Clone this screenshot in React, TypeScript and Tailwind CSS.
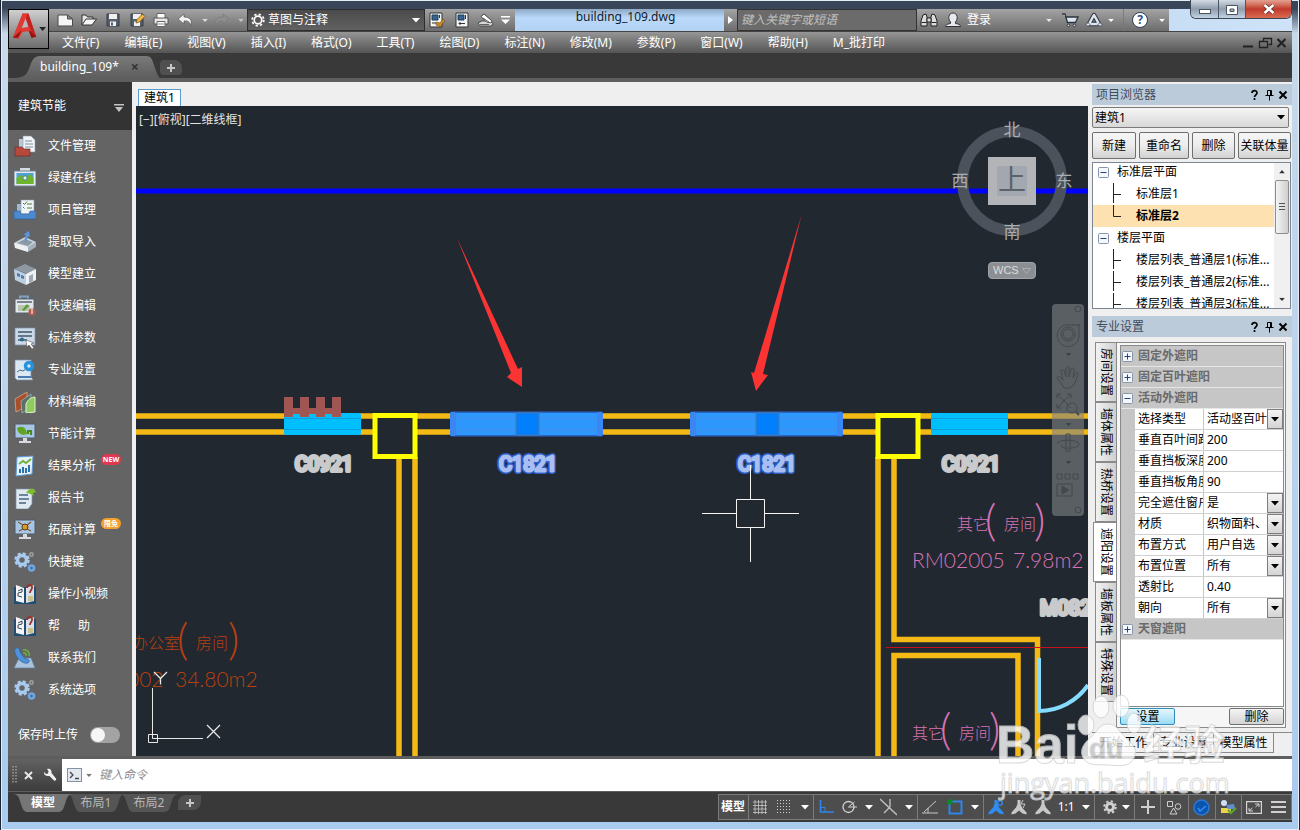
import React, { useState } from 'react';
import clsx from 'clsx';

const MENUS = [
  '文件(F)', '编辑(E)', '视图(V)', '插入(I)', '格式(O)', '工具(T)', '绘图(D)',
  '标注(N)', '修改(M)', '参数(P)', '窗口(W)', '帮助(H)', 'M_批打印',
];

const Caret: React.FC<{ className?: string }> = ({ className = 'text-white' }) => (
  <svg viewBox="0 0 8 5" className={clsx('w-2 h-[5px] shrink-0', className)} fill="currentColor">
    <path d="M0 0h8L4 4.6z" />
  </svg>
);

/* ---------- quick access toolbar icons ---------- */

const quickIcons: { name: string; art: React.ReactNode }[] = [
  {
    name: '新建',
    art: <path d="M1 3h9.500l5 4v7H1zM10.500 3v4h5" fill="#f4f4f4" stroke="#4b4b4b" />,
  },
  {
    name: '打开',
    art: (
      <>
        <path d="M1 13V3h4l1.500 2H12v2" fill="#e4e4e4" stroke="#333" />
        <path d="M1 13l4-6h10.500l-4.500 6z" fill="#f8f8f8" stroke="#333" />
      </>
    ),
  },
  {
    name: '保存',
    art: (
      <>
        <path d="M2 2h12v12H2z" fill="#56606c" stroke="#333c48" />
        <path d="M4 2h8v5H4zM5 9.500h6V14H5z" fill="#f0f0f0" />
        <path d="M6 10.500h2v3H6z" fill="#56606c" />
      </>
    ),
  },
  {
    name: '另存为',
    art: (
      <>
        <path d="M2 2h12v12H2z" fill="#56606c" stroke="#333c48" />
        <path d="M4 2h8v5H4zM5 9.500h6V14H5z" fill="#f0f0f0" />
        <path d="M7 11l1-3.500L13.500 2 16 4.500 10.500 10z" fill="#f0b840" stroke="#6d4a12" strokeWidth=".7" />
      </>
    ),
  },
  {
    name: '打印',
    art: (
      <>
        <path d="M4 1.500h8v5H4z" fill="#fff" stroke="#666" />
        <path d="M1 6h14v6H1z" fill="#e8e8e8" stroke="#555" />
        <path d="M4 9.500h8v5H4z" fill="#fff" stroke="#666" />
        <path d="M5 12h6" stroke="#888" />
      </>
    ),
  },
  {
    name: '放弃',
    art: <path d="M7 2L1 7l6 5V9c4-.5 6 1 6.500 4.500C16 8 12.500 5 7 5z" fill="#f2f2f2" stroke="#555" strokeWidth=".7" />,
  },
];

const QuickAccess: React.FC = () => (
  <div className="flex items-center w-[198px] pl-2 bg-linear-to-b from-[#a4a4a4] to-[#6c6c6c]">
    {quickIcons.map((icon) => (
      <button key={icon.name} title={icon.name} className="w-6 h-5 flex items-center">
        <svg viewBox="0 0 17 16" className="w-[17px] h-4">{icon.art}</svg>
      </button>
    ))}
    <Caret className="text-[#d8d8d8] scale-75" />
    <button title="重做" className="w-5 h-5 ml-1 flex items-center">
      <svg viewBox="0 0 17 16" className="w-[17px] h-4">
        <path d="M10 2l6 5-6 5V9C6 8.500 4 10 3.500 13.500 1 8 4.500 5 10 5z" fill="#8e8e8e" stroke="#777" strokeWidth=".7" />
      </svg>
    </button>
    <Caret className="text-[#c4c4c4] ml-1 scale-75" />
  </div>
);

const WindowControls: React.FC = () => (
  <div className="flex w-[102px] h-[19px] -mt-[9px] ml-[21px] rounded-b-md border border-t-0 border-[#3b4654] overflow-hidden">
    <button title="最小化" className="w-[28px] bg-linear-to-b from-[#d3dbe4] via-[#8f9cab] to-[#c3d4e6] border-r border-[#4a5666] grid place-items-center">
      <span className="block w-3 h-[5px] mt-[5px] bg-white border border-[#4a5460]" />
    </button>
    <button title="还原" className="w-[27px] bg-linear-to-b from-[#d3dbe4] via-[#8f9cab] to-[#c3d4e6] border-r border-[#4a5666] grid place-items-center">
      <svg viewBox="0 0 12 11" className="w-3 h-[11px]">
        <path d="M.5 1.500h11v9H.5z" fill="#fff" stroke="#4a5460" />
        <path d="M4 5h4v2.500H4z" fill="#9fb0c2" stroke="#4a5460" />
      </svg>
    </button>
    <button title="关闭" className="flex-1 bg-linear-to-b from-[#e3a191] via-[#c0392b] to-[#d96b53] grid place-items-center">
      <svg viewBox="0 0 12 10" className="w-3 h-[10px]">
        <path d="M1.500 1l9 8M10.500 1l-9 8" stroke="#5b2a26" strokeWidth="4" />
        <path d="M1.500 1l9 8M10.500 1l-9 8" stroke="#fff" strokeWidth="2.600" />
      </svg>
    </button>
  </div>
);

const TitleBar: React.FC = () => (
  <div className="flex h-[23px] bg-linear-to-r from-[#6d8aa8] via-[#a9c9ea] to-[#cfe3f8] border-b border-[#444]">
    <QuickAccess />
    <div className="relative w-[178px] border border-[#2e2e2e] bg-linear-to-b from-[#4b4b4b] to-[#616161] flex items-center">
      <svg viewBox="0 0 16 16" className="absolute left-[3px] size-[14px] pointer-events-none" fill="none" stroke="#fff">
        <circle cx="8" cy="8" r="4.300" strokeWidth="2" />
        <circle cx="8" cy="8" r="6.600" strokeWidth="2" strokeDasharray="2.600 2.580" />
      </svg>
      <select aria-label="工作空间" className="appearance-none w-full h-full pl-5 text-white text-xs outline-none">
        <option>草图与注释</option>
      </select>
      <Caret className="absolute right-1 pointer-events-none text-white" />
    </div>
    <div className="flex items-center w-[90px] pl-1 bg-linear-to-b from-[#a4a4a4] to-[#6c6c6c]">
      <button title="建筑节能" className="w-6">
        <svg viewBox="0 0 17 16" className="w-[17px] h-4">
          <path d="M1 1h12v14H1z" fill="#f2f4f6" stroke="#333" />
          <path d="M3 3h6v5H3z" fill="#36648c" stroke="#1d3d5a" />
          <path d="M10.500 3v3M3 11h4" stroke="#333" />
          <path d="M7 10l4 1 3-4 2 2-3 3-1 3-5-2z" fill="#c98a2e" stroke="#6e4712" strokeWidth=".6" />
        </svg>
      </button>
      <button title="图层" className="w-6">
        <svg viewBox="0 0 17 16" className="w-[17px] h-4">
          <path d="M3 1h12v14H3z" fill="#f2f4f6" stroke="#333" />
          <path d="M5 3h6v5H5z" fill="#36648c" stroke="#1d3d5a" />
          <path d="M12.500 3v4M6 11.500h6M6 11.500l1.500-1.500M6 11.500l1.500 1.500" stroke="#333" fill="none" />
        </svg>
      </button>
      <button title="图纸" className="w-6">
        <svg viewBox="0 0 17 16" className="w-[17px] h-4">
          <path d="M1 11l4-2h8l3.500 3-3 2H3z" fill="#d8d8d8" stroke="#333" strokeWidth=".8" />
          <path d="M4 4.500l3-2.500 7.500 6.500c1 1-1 3-2 2l-3-.5z" fill="#fff" stroke="#333" strokeWidth=".9" />
          <path d="M6 6l6 4M3 12.500h9" stroke="#444" strokeWidth=".8" />
        </svg>
      </button>
      <svg viewBox="0 0 9 8" className="w-[9px] h-2">
        <path d="M0 0h9v1.500H0zM0 3.500h9L4.500 8z" fill="#fff" />
      </svg>
    </div>
    <div className="flex-1 text-center text-xs leading-4 text-[#111c2a] bg-linear-to-b from-[#8fa9c6] via-[#b9d9fb] via-40% to-[#b4d2f2] pl-3">
      building_109.dwg
    </div>
    <button title="展开" className="w-[13px] bg-linear-to-b from-[#a4a4a4] to-[#6c6c6c] grid place-items-center">
      <svg viewBox="0 0 5 8" className="w-[5px] h-2"><path d="M0 0l5 4-5 4z" fill="#fff" /></svg>
    </button>
    <input
      aria-label="搜索"
      placeholder="键入关键字或短语"
      className="w-[180px] px-[3px] text-xs italic border border-[#333] bg-[#6b6b6b] placeholder:text-[#c2c2c2] outline-none"
    />
    <div className="flex items-center w-[252px] pl-[3px] text-white bg-linear-to-b from-[#a4a4a4] to-[#6c6c6c]">
      <button title="查找" className="w-6">
        <svg viewBox="0 0 18 16" className="w-[18px] h-4" fill="#dcdcdc" stroke="#222">
          <path d="M3 3l3-1 1 3v9H1V9zM15 3l-3-1-1 3v9h6V9z" />
          <path d="M7 6h4v4H7zM1.500 10.500h5M11.500 10.500h5" />
        </svg>
      </button>
      <button className="flex items-center text-xs">
        <svg viewBox="0 0 18 16" className="w-[18px] h-4 mr-[5px]" fill="#e6eaf0" stroke="#333">
          <path d="M1.500 14.500c0-2 2-2.500 5-3V10C3.500 6.500 4.500 1 9 1s5.500 5.500 2.500 9v1.500c3 .5 5 1 5 3z" />
        </svg>
        登录
      </button>
      <Caret className="ml-auto text-[#e8e8e8] scale-75" />
      <button title="应用商店" className="ml-2">
        <svg viewBox="0 0 18 16" className="w-[18px] h-4" fill="#dfe5ee" stroke="#2b3442">
          <path d="M1 2h3l2.500 8.500h8L17 5H5.500" strokeWidth="1.300" />
          <circle cx="7.500" cy="13.500" r="1.300" /><circle cx="13.500" cy="13.500" r="1.300" />
        </svg>
      </button>
      <button title="连接" className="ml-[6px]">
        <svg viewBox="0 0 18 16" className="w-[18px] h-4" fill="none">
          <path d="M9 3L4 12h10z" stroke="#2b3442" strokeWidth="4.500" strokeLinejoin="round" />
          <path d="M9 3L4 12h10z" stroke="#e1e6ee" strokeWidth="2.500" strokeLinejoin="round" />
          <path d="M1 12.500l2-2 2 2-2 2zM17 12.500l-2-2-2 2 2 2z" fill="#e1e6ee" stroke="#2b3442" strokeWidth=".7" />
        </svg>
      </button>
      <Caret className="ml-1 scale-75" />
      <span className="w-px h-full mx-2 bg-[#7a7a7a]" />
      <button title="帮助" className="mr-[10px] size-4 rounded-full bg-white border border-[#2d3f5c] text-[#2a4d8c] text-xs leading-[14px] font-bold">?</button>
      <Caret className="mr-[3px] scale-75" />
    </div>
    <WindowControls />
  </div>
);

const Header: React.FC = () => (
  <header className="flex h-11 shrink-0 bg-[#555]">
    <button title="应用程序菜单" className="w-[41px] h-10 shrink-0 bg-linear-to-b from-[#d0d0d0] to-[#6d6d6d] border border-black flex items-center">
      <svg viewBox="0 0 40 38" className="w-10 h-[38px]">
        <path d="M4 28L14 3h6l8 24-5 1-3-8-8 1-3 7z" fill="#c4201f" />
        <path d="M14 3l5 1-6 14 8-1 2 4-9 1-4 7-6-1z" fill="#e23a32" />
        <path d="M17 8l-4 10 7-1z" fill="#b9b9b9" />
        <path d="M4 28l9-8-4 8zM23 28l-3-8 8 7z" fill="#8f1414" />
        <path d="M31 17h7l-3.500 4z" fill="#222" />
      </svg>
    </button>
    <div className="flex-1 min-w-0">
      <TitleBar />
      <div className="flex h-[21px] items-center bg-linear-to-b from-[#969696] to-[#555] text-white text-xs">
        <nav className="flex-1 flex gap-[25px] pl-[13px] whitespace-nowrap">
          {MENUS.map((m) => (
            <button key={m} className="leading-5">{m}</button>
          ))}
        </nav>
        <svg viewBox="0 0 46 12" className="w-[46px] h-3 mr-1" fill="none" stroke="#222">
          <path d="M1 9.500h10" strokeWidth="2" />
          <path d="M21.500 4V1.500h8v6h-3M17.500 4.500h8v6h-8z" strokeWidth="1.300" />
          <path d="M35.500 2l8 8M43.500 2l-8 8" strokeWidth="2.200" />
        </svg>
      </div>
    </div>
  </header>
);

const FileTabs: React.FC = () => (
  <div className="flex items-end h-[29px] shrink-0 bg-[#393939] border-b-4 border-[#5e5e5e]">
    <div className="relative ml-2 w-[144px] h-[22px]">
      <svg viewBox="0 0 144 22" className="absolute inset-0 w-full h-full">
        <defs>
          <linearGradient id="docTab" x1="0" y1="0" x2="0" y2="1">
            <stop offset="0" stopColor="#7a7a7a" />
            <stop offset="1" stopColor="#5e5e5e" />
          </linearGradient>
        </defs>
        <path d="M0 22c10-1 11-4 14-12S19 0 25 0h105c5 0 6 3 8 9s4 12 6 13z" fill="url(#docTab)" />
      </svg>
      <div className="relative flex items-center h-full pl-6 text-xs text-white">
        <span>building_109*</span>
        <button title="关闭" className="ml-3 text-[#333] leading-4 font-bold text-sm">×</button>
      </div>
    </div>
    <button title="新图形" className="mb-[3px] w-[22px] h-[15px] grid place-items-center bg-[#505050] rounded-tl-sm rounded-tr-lg rounded-b-sm">
      <svg viewBox="0 0 8 8" className="size-2"><path d="M4 0v8M0 4h8" stroke="#c6c6c6" strokeWidth="2" /></svg>
    </button>
  </div>
);

/* ---------- left sidebar ---------- */

const gears = (
  <>
    <circle cx="8" cy="9" r="4.500" fill="none" stroke="#a9caef" strokeWidth="3.500" />
    <circle cx="8" cy="9" r="6.500" fill="none" stroke="#a9caef" strokeWidth="2.500" strokeDasharray="3 2.100" />
    <circle cx="17.500" cy="17" r="2.500" fill="none" stroke="#6aa6ea" strokeWidth="2.500" />
    <circle cx="17.500" cy="3.500" r="1.700" fill="none" stroke="#a2a2a2" strokeWidth="1.500" />
  </>
);

const book = (
  <>
    <path d="M0 4h22v17H0z" fill="#1f4d74" />
    <path d="M2 2l8 3v15l-8-2z" fill="#f4f4f4" />
    <path d="M20 2l-8 3v15l8-2z" fill="#d9e0e8" />
    <path d="M4 8l4-2v3l-4 1v3l4 1" stroke="#345" fill="none" />
    <path d="M13 5c0-4 6-4 5 0 0 2-2 2-2 5" stroke="#a03030" strokeWidth="1.800" fill="none" />
    <path d="M14 13h5v5h-5z" fill="#c9c08a" />
  </>
);

const screen = (
  <>
    <path d="M1 1h20v14H1z" fill="#a8c6e4" stroke="#4f5a66" />
    <path d="M9 15h4v3H9zM5 18h12v2H5z" fill="#d6dade" />
  </>
);

const sidebarItems: { label: string; badge?: 'new' | 'free'; art: React.ReactNode }[] = [
  {
    label: '文件管理',
    art: (
      <>
        <path d="M5 4h10v13H5z" fill="#b9c7d6" />
        <path d="M9 1h8l4 4v12H9z" fill="#f2f5f8" stroke="#8c98a5" strokeWidth=".6" />
        <path d="M11 6h7M11 9h8M11 12h8" stroke="#7d8ea0" />
        <path d="M1 12h7l2 2h6v7H1z" fill="#b4493c" stroke="#7c2a22" strokeWidth=".7" />
      </>
    ),
  },
  {
    label: '绿建在线',
    art: (
      <>
        <path d="M6 1h10v4H6z" fill="#d5dbe2" />
        <path d="M0 4h22v15H0z" fill="#e3e9ef" stroke="#6d8298" />
        <path d="M2.500 6h17v11h-17z" fill="#4fa3d1" />
        <path d="M2.500 17v-6l5-3 4 3 4-4 4 4v6z" fill="#6fb52c" />
        <circle cx="11" cy="11" r="2.200" fill="#f5f0c8" stroke="#2f7fb0" />
      </>
    ),
  },
  {
    label: '项目管理',
    art: (
      <>
        <path d="M3 5h5v9H3z" fill="#9fb9d4" />
        <path d="M7 1h13v14H7z" fill="#f0f4f7" stroke="#8c98a5" strokeWidth=".6" />
        <path d="M9 4l1.500 1.500L13 2.500M9 8l1.500 1.500M13 5h5M13 9h5" stroke="#4b7a3a" fill="none" />
        <path d="M0 12h6l1 3h8l1-3h6v8H0z" fill="#4c8ad0" stroke="#2d5c98" strokeWidth=".6" />
      </>
    ),
  },
  {
    label: '提取导入',
    art: (
      <>
        <path d="M0 12l11-6 11 5-8 9z" fill="#cdd6de" />
        <path d="M0 12l14 4v5L1 17z" fill="#eef1f4" />
        <path d="M14 16l8-5v5l-8 5z" fill="#a3afba" />
        <path d="M3 12l8-4 8 3-5 4z" fill="#8d99a4" />
        <path d="M12 12c-2-4-1-7 0-8l-2.500-.5L15 0l1 6-1.500-1c-1 2-1.500 4-2.500 7z" fill="#5b96e0" />
      </>
    ),
  },
  {
    label: '模型建立',
    art: (
      <>
        <path d="M0 6l11-5 11 5-8 5z" fill="#8d98a3" />
        <path d="M0 6l12 5v11L1 17z" fill="#bccfe3" />
        <path d="M12 11l10-5v11l-10 5z" fill="#edf1f4" />
        <path d="M3 10l3 1v3l-3-1zM7 12l3 1v3l-3-1z" fill="#4f79a6" />
        <path d="M15 13l4-2v7l-4 2z" fill="#9aa8b5" />
      </>
    ),
  },
  {
    label: '快速编辑',
    art: (
      <>
        <path d="M6 4V1.500h8V4" fill="none" stroke="#7fa3c4" strokeWidth="2" />
        <path d="M1 4h19v14H1z" fill="#e3e8ec" stroke="#56636f" />
        <path d="M3 7h15" stroke="#56636f" strokeWidth="1.500" />
        <path d="M4 10h12v6H4z" fill="#b8c6ae" />
        <path d="M8 15l5-6 2 2-5 5z" fill="#5c9a3c" />
        <circle cx="18" cy="17" r="3.500" fill="#b55a50" /><path d="M18 14v5" stroke="#fff" />
      </>
    ),
  },
  {
    label: '标准参数',
    art: (
      <>
        <path d="M1 1h20v17H1z" fill="#c9d9e8" stroke="#7b8fa3" strokeWidth=".7" />
        <path d="M4 5h14M4 9h14M4 13h9" stroke="#41566b" strokeWidth="1.500" />
        <circle cx="8" cy="12.500" r="2" fill="#2d6894" />
        <path d="M12 13l8 3-3 1 3 4-2 1-3-4-2 2z" fill="#fff" stroke="#555" strokeWidth=".6" />
      </>
    ),
  },
  {
    label: '专业设置',
    art: (
      <>
        <path d="M1 1h16v17l2 3H3l-2-2z" fill="#dbe7f2" stroke="#7b8fa3" strokeWidth=".7" />
        <path d="M3 13l3-2 3 1 3-2" stroke="#4a6b8d" fill="none" />
        <path d="M4 18h13" stroke="#4a7bb0" strokeWidth="2" />
        <circle cx="15" cy="7" r="3.500" fill="none" stroke="#2393dd" strokeWidth="3.500" />
      </>
    ),
  },
  {
    label: '材料编辑',
    art: (
      <>
        <path d="M1 8L13 1v14L2 21z" fill="#a8502d" stroke="#e0b49b" strokeWidth=".7" />
        <path d="M7 10l10-7v13L8 22z" fill="#59716e" stroke="#a9bdb9" strokeWidth=".7" />
        <path d="M12 22V13c2-5 6-7 9-7v15z" fill="#8fcb5e" stroke="#e3f2d3" />
      </>
    ),
  },
  {
    label: '节能计算',
    art: (
      <>
        {screen}
        <path d="M3 5c6-3 9 0 10 6-5 2-9 0-10-6z" fill="#5fa51e" />
        <path d="M14 11V8h3v4" stroke="#4a8a1a" strokeWidth="2" fill="none" />
      </>
    ),
  },
  {
    label: '结果分析',
    badge: 'new',
    art: (
      <>
        <path d="M3 2l16-1-1 18-16 2z" fill="#e9f1f8" stroke="#5e9bd0" />
        <path d="M5 9l4-3 3 2 5-4" stroke="#6db33f" strokeWidth="2" fill="none" />
        <path d="M6 18v-4M9 18v-6M12 18v-5M15 17v-7" stroke="#2872b3" strokeWidth="2" />
      </>
    ),
  },
  {
    label: '报告书',
    art: (
      <>
        <path d="M2 2h16v15l-4 5H2z" fill="#dfe9f2" stroke="#7b8fa3" strokeWidth=".7" />
        <path d="M5 8h9M5 12h10M5 16h7" stroke="#49637d" strokeWidth="1.500" />
        <path d="M12 6c2-4 5-5 8-4l2 3-3 1 1 3c-3-2-5-3-8-3z" fill="#7dbb2f" />
      </>
    ),
  },
  {
    label: '拓展计算',
    badge: 'free',
    art: (
      <>
        {screen}
        <circle cx="11" cy="8" r="3" fill="#d89b2b" stroke="#5a3b12" />
        <path d="M4 3l5 3M17 3l-4 3M5 12l4-2M17 12l-4-2" stroke="#7a5a32" strokeWidth="1.300" />
      </>
    ),
  },
  { label: '快捷键', art: gears },
  { label: '操作小视频', art: book },
  { label: '帮\u3000\u2002助', art: book },
  {
    label: '联系我们',
    art: (
      <>
        <path d="M5 11h12l4 10H0z" fill="#a9c3dd" stroke="#5f7f9e" strokeWidth=".7" />
        <path d="M1 2c3-3 5 0 5 3l5 7c3-1 6 2 3 4C8 18-1 8 1 2z" fill="#4f93dc" stroke="#2c62a0" strokeWidth=".7" />
        <path d="M9 6c2-1 4 1 3 3M9 3c4-1 7 2 6 6" stroke="#6db33f" strokeWidth="1.500" fill="none" />
      </>
    ),
  },
  { label: '系统选项', art: gears },
];

const Sidebar: React.FC = () => {
  const [upload, setUpload] = useState(false);

  return (
    <aside className="w-[124px] shrink-0 flex flex-col bg-[#646464] text-white text-xs">
      <button className="h-12 shrink-0 flex items-center justify-between pl-[10px] pr-2 bg-[#333]">
        建筑节能
        <svg viewBox="0 0 10 8" className="w-[10px] h-2 mt-1"><path d="M0 0h10v1.500H0zM1 3h8L5 8z" fill="#c4c4c4" /></svg>
      </button>
      <ul>
        {sidebarItems.map((item) => (
          <li key={item.label}>
            <button className="flex items-center w-full h-8 pl-[6px]">
              <svg viewBox="0 0 22 22" className="size-[22px] mr-3">{item.art}</svg>
              <span className="relative">
                {item.label}
                {item.badge === 'new' && (
                  <span className="absolute left-full -top-1 ml-[5px] w-5 h-[11px] rounded-full bg-[#e0394f] text-[7px] leading-[11px] font-bold text-center">NEW</span>
                )}
                {item.badge === 'free' && (
                  <span className="absolute left-full -top-1 ml-[5px] w-5 h-[11px] rounded-full bg-[#f5a02c] text-[7px] leading-[11px] font-bold text-center">限免</span>
                )}
              </span>
            </button>
          </li>
        ))}
      </ul>
      <label className="flex items-center gap-3 mt-[21px] pl-[10px]">
        保存时上传
        <input type="checkbox" className="peer sr-only" checked={upload} onChange={() => setUpload(!upload)} />
        <span className="w-[30px] h-4 rounded-full bg-[#a3a3a3] p-px peer-checked:bg-sky-500">
          <span className={clsx('block size-[14px] rounded-full bg-[#f6f6f6]', upload && 'ml-[14px]')} />
        </span>
      </label>
    </aside>
  );
};

/* ---------- drawing area ---------- */

const SelectedWindow: React.FC<{ x: number }> = ({ x }) => (
  <g>
    <rect x={x} y="411.500" width="153" height="25" rx="2" fill="#2a66c8" />
    <rect x={x + 2} y="413" width="149" height="22" fill="#2d97fb" />
    <path d={`M${x + 6} 418h140M${x + 6} 430h140`} stroke="#4a8ce8" />
    <rect x={x} y="412" width="6" height="24" rx="2" fill="#3c86f4" />
    <rect x={x + 147} y="412" width="6" height="24" rx="2" fill="#3c86f4" />
    <rect x={x + 66} y="413" width="23" height="22" fill="#0080ff" stroke="#4a78b0" />
  </g>
);

const PlainWindow: React.FC<{ x: number }> = ({ x }) => (
  <g>
    <rect x={x} y="413" width="77" height="22" rx="2" fill="#00bfff" />
    <path d={`M${x} 418.500h77M${x} 429.500h77`} stroke="#0f9fdc" />
  </g>
);

const Drawing: React.FC = () => (
  <svg viewBox="136 106 952 650" preserveAspectRatio="xMidYMid slice" className="absolute inset-0 w-full h-full">
    <path d="M136 191h952" stroke="#0000ff" strokeWidth="5" />

    {/* walls */}
    <g fill="none" stroke="#f5b915" strokeWidth="5.500">
      <path d="M136 416h952M136 432h952" />
      <path d="M399 457v299M415 457v299M878 457v299" />
      <path d="M894 457v182.500h143.500V756M894 756V655.500h124V756" />
    </g>
    <path d="M886 647h202v1h-202z" fill="#c8101c" />
    <path d="M1039 658v53c20 0 38-10 49-26" fill="none" stroke="#86dcff" strokeWidth="4" />

    {/* columns */}
    <rect x="375" y="415.500" width="40" height="41" fill="#212830" stroke="#ffff00" strokeWidth="5" />
    <rect x="878" y="415.500" width="40" height="41" fill="#212830" stroke="#ffff00" strokeWidth="5" />

    <PlainWindow x={284} />
    <PlainWindow x={931} />
    <path d="M284 397h9v11h7v-11h9v11h7v-11h9v11h7v-11h9v20h-9v-3h-7v3h-9v-3h-7v3h-9v-3h-7v3h-9z" fill="#a05653" />
    <SelectedWindow x={450} />
    <SelectedWindow x={690} />

    {/* opening tags */}
    <g className="font-['Roboto','Liberation_Sans',sans-serif]" fontSize="20" strokeLinejoin="round">
      <g fill="#c9cacb" stroke="#c9cacb" strokeWidth="4">
        <text x="295" y="471">C0921</text>
        <text x="942" y="471">C0921</text>
        <text x="1040" y="615">M0821</text>
      </g>
      <g fill="#2b5cc4" stroke="#2b5cc4" strokeWidth="6">
        <text x="499" y="471">C1821</text>
        <text x="738" y="471">C1821</text>
      </g>
      <g fill="#a9bff2" stroke="#a9bff2" strokeWidth="3">
        <text x="499" y="471">C1821</text>
        <text x="738" y="471">C1821</text>
      </g>
    </g>

    {/* room names */}
    <g className="font-['Lato','Noto_Sans_CJK_SC',sans-serif]" fontWeight="300">
      <g fill="#d673b4">
        <text x="957" y="530" fontSize="16">其它</text>
        <text x="985" y="536" fontSize="44">(</text>
        <text x="1004" y="530" fontSize="16">房间</text>
        <text x="1034" y="536" fontSize="44">)</text>
        <text x="912" y="568" fontSize="21">RM02005</text>
        <text x="1013" y="568" fontSize="21">7.98m2</text>
        <text x="912" y="739" fontSize="16">其它</text>
        <text x="940" y="745" fontSize="44">(</text>
        <text x="959" y="739" fontSize="16">房间</text>
        <text x="989" y="745" fontSize="44">)</text>
      </g>
      <g fill="#b8400f">
        <text x="132" y="649" fontSize="16">办公室</text>
        <text x="177" y="655" fontSize="44">(</text>
        <text x="196" y="649" fontSize="16">房间</text>
        <text x="228" y="655" fontSize="44">)</text>
        <text x="127" y="687" fontSize="21">002</text>
        <text x="175" y="687" fontSize="21">34.80m2</text>
      </g>
    </g>

    {/* ucs icon */}
    <g fill="none" stroke="#e8e8e8">
      <path d="M152.500 688v50.500H203M148.500 734.500h9v8h-9z" />
      <path d="M154 672l6.500 6.500L167 672M160.500 678.500v6M207 725l13 13M220 725l-13 13" strokeWidth="1.300" />
    </g>

    {/* callout arrows */}
    <path d="M457 238l54 135-4 4 15 10 0-20-4 2z" fill="#fb3433" />
    <path d="M801.500 215l-47.500 158-3-1 5 19 12-16-5-1z" fill="#fb3433" />

    {/* crosshair */}
    <path d="M702 513.500h34M765 513.500h34M750.500 465v34M750.500 528v34M736.500 499.500h28v28h-28z" fill="none" stroke="#f4f4f4" />
  </svg>
);

const ViewCube: React.FC = () => (
  <div className="absolute top-[14px] right-[15px] w-[122px] text-[#a9adb1]">
    <div className="relative grid grid-cols-[18px_1fr_18px] grid-rows-[20px_1fr_20px] h-[122px] place-items-center text-[17px] leading-[22px]">
      <svg viewBox="0 0 122 122" className="absolute inset-0 w-full h-full">
        <circle cx="61" cy="61" r="49.500" fill="none" stroke="#4b525b" strokeWidth="11" />
      </svg>
      <span className="relative col-start-2">北</span>
      <span className="relative col-start-1 row-start-2">西</span>
      <div className="relative col-start-2 row-start-2 size-12 grid place-items-center bg-[#b3b4b7]">
        <span className="size-[30px] bg-[#a3a8b0] text-[#5c626a] text-[28px] leading-[26px] text-center">上</span>
      </div>
      <span className="relative col-start-3 row-start-2">东</span>
      <span className="relative col-start-2 row-start-3">南</span>
    </div>
    <button className="mt-[20px] mx-auto flex items-center justify-between w-12 h-[17px] px-1 rounded-sm bg-[#8b8f94] border border-[#a0a3a7] text-[11px] text-[#dcdcdc] font-['Liberation_Sans',sans-serif]">
      WCS
      <svg viewBox="0 0 9 6" className="w-[9px] h-[6px]"><path d="M.5.5h8l-4 5z" fill="none" stroke="#a9acb0" /></svg>
    </button>
  </div>
);

const NavBar: React.FC = () => (
  <div className="absolute top-[198px] right-1 w-8 h-[212px] rounded-sm bg-[#7f8385]/60">
    <svg viewBox="0 0 32 212" className="w-full h-full" fill="none" stroke="#44494d">
      <circle cx="26" cy="5" r="3" />
      <path d="M27 20v13a11 11 0 1 1-8-12h8z" />
      <circle cx="16" cy="30" r="7" /><circle cx="16" cy="30" r="5" />
      <path d="M14 49h5l-2.500 3zM14 119h5l-2.500 3zM14 157h5l-2.500 3z" fill="#3b4044" stroke="none" />
      <path d="M9 79l-4-5c0-2 3-2 4 0l2 2-2-9c0-2 2-2 3 0l2 6V64c1-2 3-2 3 0v9l2-8c1-2 3-1 3 1l-1 8 3-5c1-1 3 0 2 2l-4 10-4 3h-6z" />
      <path d="M5 90l14 14M19 90L5 104M5 94v-4h4M15 90h4v4M5 100v4h4" />
      <circle cx="20" cy="104" r="5" /><path d="M24 108l3 3" strokeWidth="2" />
      <path d="M14 130h4v17h-4zM5 140c0-5 22-5 22 0s-16 5-16 3M9 141l2 3" />
      <path d="M5 170h5v5H5zM13 170h5v5h-5zM21 170h5v5h-5zM5 180h15v12H5z" />
      <path d="M10 182l7 4-7 4z" fill="#44494d" />
      <circle cx="26" cy="206" r="3" />
    </svg>
  </div>
);

const Viewport: React.FC = () => (
  <main className="flex-1 min-w-0 flex flex-col bg-[#efefef] pl-1">
    <div className="h-6 shrink-0 pt-[2px] pl-[2px]">
      <button className="h-[18px] px-[5px] text-xs leading-4 text-black bg-white border border-b-0 border-[#5a9bd3]">建筑1</button>
    </div>
    <div className="relative flex-1 bg-[#212830] overflow-hidden">
      <Drawing />
      <div className="relative px-[3px] pt-[5px] text-xs leading-[17px] text-[#e4e4e4]">[−][俯视][二维线框]</div>
      <ViewCube />
      <NavBar />
    </div>
  </main>
);

/* ---------- right dock ---------- */

const PanelTitle: React.FC<{ title: string }> = ({ title }) => (
  <div className="flex items-center h-[21px] shrink-0 pl-1 pr-1 bg-[#bccbda] text-xs text-[#3f4c5c]">
    <h2 className="flex-1">{title}</h2>
    <svg viewBox="0 0 38 12" className="w-[38px] h-3" fill="none" stroke="#000">
      <path d="M2 4c0-3 5-3 5-.5S4.500 6 4.500 8M4.500 9v2" strokeWidth="1.700" />
      <path d="M17.500 6V1.500h4V6M15.500 6.500h8M19.500 7v4.500M20.500 2v4" />
      <path d="M29.500 2.500l7 7M36.500 2.500l-7 7" strokeWidth="2" />
    </svg>
  </div>
);

const Toggle: React.FC<{ open: boolean }> = ({ open }) => (
  <svg viewBox="0 0 11 11" className="size-[11px] shrink-0">
    <rect x=".5" y=".5" width="10" height="10" rx="1" fill="#f4f7fb" stroke="#8795ab" />
    <path d={open ? 'M2.500 5.500h6' : 'M2.500 5.500h6M5.500 2.500v6'} stroke="#2a3f7c" />
  </svg>
);

const tree = [
  { name: '标准层平面', items: ['标准层1', '标准层2'] },
  { name: '楼层平面', items: ['楼层列表_普通层1(标准...', '楼层列表_普通层2(标准...', '楼层列表_普通层3(标准...'] },
];

const ProjectBrowser: React.FC = () => {
  const [active, setActive] = useState('标准层2');

  return (
    <section className="flex flex-col">
      <PanelTitle title="项目浏览器" />
      <div className="relative mt-[2px] mr-[3px]">
        <select aria-label="项目" className="appearance-none block w-full h-[21px] pl-[2px] text-xs text-black rounded-xs border border-[#7a7a7a] bg-linear-to-b from-[#f5f5f5] to-[#d8d8d8] outline-none">
          <option>建筑1</option>
        </select>
        <Caret className="absolute right-1 top-2 text-black pointer-events-none" />
      </div>
      <div className="grid grid-cols-[44px_50px_43px_1fr] gap-x-[3px] mt-[4px] pr-px">
        {['新建', '重命名', '删除', '关联体量'].map((b) => (
          <button key={b} className="h-[27px] text-xs text-black whitespace-nowrap rounded-xs border border-[#6f6f6f] bg-linear-to-b from-[#f6f6f6] via-[#ececec] to-[#d2d2d2]">
            {b}
          </button>
        ))}
      </div>
      <div className="flex mt-[3px] mr-px h-[147px] bg-white border border-[#7d8794] overflow-hidden">
        <ul className="flex-1 min-w-0 text-xs leading-[22px] text-black -mt-[2px]">
          {tree.map((group) => (
            <li key={group.name}>
              <div className="flex items-center gap-2 h-[22px] pl-[5px]">
                <Toggle open />
                {group.name}
              </div>
              <ul>
                {group.items.map((name) => (
                  <li key={name}>
                    <button
                      onClick={() => setActive(name)}
                      className={clsx(
                        'flex items-center w-full h-[22px] pl-5 whitespace-nowrap text-left',
                        name === active && 'bg-[#fde1b0] font-bold',
                      )}
                    >
                      <svg viewBox="0 0 8 22" className="w-2 h-[22px] mr-[15px] shrink-0" fill="none" stroke="#222">
                        <path d={name === '标准层2' ? 'M.5 0v11.500H8' : 'M.5 0v20M.5 11.500H8'} />
                      </svg>
                      {name}
                    </button>
                  </li>
                ))}
              </ul>
            </li>
          ))}
        </ul>
        <div className="w-4 shrink-0 flex flex-col items-center bg-[#f0f0f0]">
          <Caret className="text-[#333] rotate-180 mt-[6px] scale-75" />
          <div className="w-[14px] h-[54px] mt-[6px] grid place-items-center rounded-xs border border-[#8d8d8d] bg-linear-to-r from-[#f4f4f4] to-[#cfcfcf]">
            <svg viewBox="0 0 6 8" className="w-[6px] h-2"><path d="M0 .5h6M0 3.500h6M0 6.500h6" stroke="#555" /></svg>
          </div>
          <Caret className="text-[#333] mt-auto mb-[6px] scale-75" />
        </div>
      </div>
    </section>
  );
};

const sideTabs = ['房间设置', '墙体属性', '热桥设置', '遮阳设置', '墙板属性', '特殊设置'];

const props: { label: string; value: string; select?: boolean }[] = [
  { label: '选择类型', value: '活动竖百叶', select: true },
  { label: '垂直百叶间距', value: '200' },
  { label: '垂直挡板深度', value: '200' },
  { label: '垂直挡板角度', value: '90' },
  { label: '完全遮住窗户', value: '是', select: true },
  { label: '材质', value: '织物面料、', select: true },
  { label: '布置方式', value: '用户自选', select: true },
  { label: '布置位置', value: '所有', select: true },
  { label: '透射比', value: '0.40' },
  { label: '朝向', value: '所有', select: true },
];

const Category: React.FC<{ name: string; open?: boolean }> = ({ name, open = false }) => (
  <button className="flex items-center gap-[5px] w-full h-[21px] pl-px bg-[#c6c6c6] border-b border-[#e6e6e6] text-[#6a6a6a] font-bold">
    <Toggle open={open} />
    {name}
  </button>
);

const SettingsPanel: React.FC = () => (
  <section className="flex-1 min-h-0 flex flex-col mt-[7px] text-xs text-black">
    <PanelTitle title="专业设置" />
    <div className="flex flex-1 min-h-0 mt-[5px] mr-[6px] ml-[3px]">
      <div className="w-[21px] shrink-0">
        {sideTabs.map((t) => (
          <button
            key={t}
            className={clsx(
              'block h-[60px] text-xs leading-4 text-center border border-r-0 border-[#8a8a8a] [writing-mode:vertical-rl] [text-orientation:sideways]',
              t === '遮阳设置' ? '-ml-[2px] w-[24px] bg-white' : 'w-[21px] bg-linear-to-r from-[#f2f2f2] to-[#cfcfcf]',
            )}
          >
            {t}
          </button>
        ))}
      </div>
      <div className="flex-1 min-w-0 flex flex-col pt-[2px] pl-[3px] pr-px pb-[2px] border border-[#8a8a8a] bg-[#f6f6f6]">
        <div className="flex-1 border border-[#8a8a8a] bg-white">
          <Category name="固定外遮阳" />
          <Category name="固定百叶遮阳" />
          <Category name="活动外遮阳" open />
          <div className="pl-[14px] bg-[#c6c6c6]">
            {props.map((p, i) => (
              <div key={p.label} className="flex h-[21px] bg-white border-b border-[#d0d0d0]">
                <label htmlFor={`prop-${i}`} className="w-[69px] shrink-0 pl-[3px] leading-5 whitespace-nowrap overflow-hidden border-r border-[#c6c6c6]">
                  {p.label}
                </label>
                {p.select ? (
                  <div className="relative flex-1 min-w-0">
                    <select id={`prop-${i}`} className="appearance-none w-full h-full pl-[3px] pr-4 outline-none">
                      <option>{p.value}</option>
                    </select>
                    <span className="absolute right-0 top-0 w-4 h-5 grid place-items-center pointer-events-none border border-[#7d7d7d] bg-linear-to-b from-[#f4f4f4] to-[#d4d4d4]">
                      <Caret className="text-black" />
                    </span>
                  </div>
                ) : (
                  <input id={`prop-${i}`} defaultValue={p.value} className="flex-1 min-w-0 pl-[3px] outline-none" />
                )}
              </div>
            ))}
          </div>
          <Category name="天窗遮阳" />
        </div>
        <div className="flex justify-between pt-px">
          <button className="w-[55px] h-[17px] leading-[15px] rounded-xs border border-[#2f8fb8] bg-linear-to-b from-[#e6f6fc] to-[#9adcf3]">设置</button>
          <button className="w-[55px] h-[17px] leading-[15px] rounded-xs border border-[#707070] bg-linear-to-b from-[#f4f4f4] to-[#d4d4d4]">删除</button>
        </div>
      </div>
    </div>
    <div className="flex h-6 shrink-0 mt-1 pl-[2px] border-t border-[#8a8a8a]">
      {['开始工作', '专业设置', '模型属性'].map((t) => (
        <button key={t} className="h-5 w-[60px] border-r border-b border-[#8a8a8a] whitespace-nowrap bg-[#f0f0f0]">{t}</button>
      ))}
    </div>
  </section>
);

/* ---------- bottom ---------- */

const CommandLine: React.FC = () => (
  <div className="flex h-9 shrink-0 pt-[3px] pb-px bg-[#5e5e5e]">
    <div className="flex items-center w-[54px] pl-1 bg-linear-to-b from-[#626262] to-[#3c3c3c]">
      <svg viewBox="0 0 5 18" className="w-[5px] h-[18px]">
        <path d="M1 0v18M4 0v18" stroke="#9d9d9d" strokeWidth="1.500" strokeDasharray="1.500 1.500" />
      </svg>
      <button title="关闭" className="ml-[7px]">
        <svg viewBox="0 0 9 9" className="size-[9px]"><path d="M1 1l7 7M8 1L1 8" stroke="#e8e8e8" strokeWidth="2" /></svg>
      </button>
      <button title="自定义" className="ml-[10px]">
        <svg viewBox="0 0 14 14" className="size-[14px]">
          <path d="M1 4l2 2 2-.5L5.500 3 4 1c3-1 5 1 4.500 4l4.500 5.500c1 1-1 3-2 2L6.500 8C3.500 8.500.5 7 1 4z" fill="#f0f0f0" />
        </svg>
      </button>
    </div>
    <div className="flex-1 flex items-center pl-[5px] bg-white">
      <svg viewBox="0 0 15 14" className="w-[15px] h-[14px]">
        <rect x=".5" y=".5" width="14" height="13" fill="#e4e9f0" stroke="#8391a4" />
        <path d="M3 4l3 3-3 3M8 10.500h4" fill="none" stroke="#445" strokeWidth="1.300" />
      </svg>
      <Caret className="ml-[3px] text-[#777] scale-75" />
      <input aria-label="命令行" placeholder="键入命令" className="flex-1 ml-[6px] text-xs italic placeholder:text-[#8c8c8c] outline-none" />
    </div>
  </div>
);

const LayoutTab: React.FC<{ name: string; active?: boolean }> = ({ name, active }) => (
  <button className={clsx('relative h-[18px] w-[58px] -mr-[5px] text-xs leading-4', active ? 'font-bold text-white z-10' : 'text-[#b9b9b9]')}>
    <svg viewBox="0 0 58 18" className="absolute inset-0 w-full h-full">
      <path d="M0 0h58c-5 1-5 4-7 10s-3 8-7 8H14c-4 0-5-2-7-8S5 1 0 0z" fill={active ? '#767676' : '#555'} />
    </svg>
    <span className="relative">{name}</span>
  </button>
);

const StatusCell: React.FC<{ className: string; title: string; children: React.ReactNode }> = ({ className, title, children }) => (
  <button title={title} className={clsx('flex items-center justify-between h-full px-1 border-l border-[#7b7b7b] text-white shrink-0', className)}>
    {children}
  </button>
);

/* compass-like figure with a round head */
const person = 'M6.500 0h3v4l1.500 3.500 4.500 5v2l-4-1L8 10.500 4.500 13.500l-4 1v-2L5 7.500 6.500 4z';

const StatusBar: React.FC = () => (
  <footer className="flex items-start h-[30px] shrink-0 pt-[2px] pl-[6px] bg-[#393939]">
    <LayoutTab name="模型" active />
    <div className="flex">
      <LayoutTab name="布局1" />
      <LayoutTab name="布局2" />
    </div>
    <button title="新建布局" className="w-[23px] h-[15px] mt-px ml-[5px] grid place-items-center bg-[#505050] rounded-tl-lg rounded-br-lg">
      <svg viewBox="0 0 8 8" className="size-2"><path d="M4 0v8M0 4h8" stroke="#c6c6c6" strokeWidth="2" /></svg>
    </button>
    <div className="flex h-[26px] ml-auto bg-[#4d4d4d] border-y border-r border-[#7b7b7b]">
      <StatusCell title="模型" className="w-[30px] text-xs font-bold whitespace-nowrap !px-[2px]">模型</StatusCell>
      <StatusCell title="栅格" className="w-[65px]">
        <svg viewBox="0 0 14 14" className="size-[14px]"><path d="M2 0v14M5.500 0v14M9 0v14M12.500 0v14M0 2h14M0 5.500h14M0 9h14M0 12.500h14" stroke="#c8c8c8" strokeWidth=".8" /></svg>
        <svg viewBox="0 0 14 14" className="size-[14px]" stroke="#d0d0d0" strokeWidth="1" strokeDasharray="1 2"><path d="M0 .5h14M0 3.500h14M0 6.500h14M0 9.500h14M0 12.500h14" /></svg>
        <Caret />
      </StatusCell>
      <StatusCell title="极轴追踪" className="w-[104px]">
        <svg viewBox="0 0 16 14" className="w-4 h-[14px]" fill="none" stroke="#2f86e8"><path d="M2.500 0v12H16" strokeWidth="1.600" /><path d="M3 7.500h4V12" /></svg>
        <svg viewBox="0 0 15 14" className="w-[15px] h-[14px]" fill="none" stroke="#d2d2d2"><circle cx="6.500" cy="7" r="5.500" strokeWidth="1.300" /><path d="M6.500 7l6-5M6.500 7H15" /></svg>
        <Caret />
        <svg viewBox="0 0 17 18" className="w-[17px] h-[18px]" stroke="#c2c2c2" fill="none"><path d="M0 1l17 16M10 1v8M10 9l-6 6" strokeWidth="1.300" /></svg>
        <Caret />
      </StatusCell>
      <StatusCell title="对象捕捉" className="w-[66px]">
        <svg viewBox="0 0 16 14" className="w-4 h-[14px]" fill="none" stroke="#c8c8c8"><path d="M0 13h16M2 12L14 1M6 8v5" /></svg>
        <svg viewBox="0 0 16 16" className="size-4"><rect x="2.500" y="2.500" width="12" height="12" fill="none" stroke="#2f86e8" strokeWidth="2" /><circle cx="3" cy="3" r="2.800" fill="#0c8a28" /></svg>
        <Caret />
      </StatusCell>
      <StatusCell title="注释比例" className="w-[111px] text-xs">
        <svg viewBox="0 0 16 15" className="w-4 h-[15px]"><path d={person} fill="#2f8df0" /><circle cx="12" cy="3" r="2.300" fill="none" stroke="#2f8df0" strokeWidth="1.300" /></svg>
        <svg viewBox="0 0 16 15" className="w-4 h-[15px]"><path d={person} fill="#c8c8c8" /><path d="M12 0l-2 4h4l-2 4" stroke="#c8c8c8" fill="none" /></svg>
        <svg viewBox="0 0 16 15" className="w-4 h-[15px]"><path d={person} fill="#c8c8c8" /></svg>
        1:1
        <Caret />
      </StatusCell>
      <StatusCell title="切换工作空间" className="w-10 pl-2">
        <svg viewBox="0 0 14 14" className="size-[14px]" fill="none" stroke="#d0d0d0"><circle cx="7" cy="7" r="3.500" strokeWidth="3" /><circle cx="7" cy="7" r="5.800" strokeWidth="2" strokeDasharray="2.300 2.250" /></svg>
        <Caret />
      </StatusCell>
      <StatusCell title="注释监视器" className="w-[26px] pl-[6px]">
        <svg viewBox="0 0 14 14" className="size-[14px]"><path d="M7 0v14M0 7h14" stroke="#d0d0d0" strokeWidth="2" /></svg>
      </StatusCell>
      <StatusCell title="隔离对象" className="w-7 pl-[5px]">
        <svg viewBox="0 0 16 15" className="w-4 h-[15px]" fill="none" stroke="#cfcfcf"><path d="M1.500 1.500h5v5h-5zM4 14l3.500-6 3.500 6z" /><circle cx="12" cy="6.500" r="2.800" /></svg>
      </StatusCell>
      <StatusCell title="硬件加速" className="w-[27px] pl-1">
        <svg viewBox="0 0 17 17" className="size-[17px]"><circle cx="8.500" cy="8.500" r="7.500" fill="#0b55b0" stroke="#2f78d0" strokeWidth="1.600" /><path d="M5 9l2 3 6-5" stroke="#2f8df0" strokeWidth="1.600" fill="none" /></svg>
      </StatusCell>
      <StatusCell title="图形性能" className="w-[26px] pl-1">
        <svg viewBox="0 0 17 16" className="w-[17px] h-4"><circle cx="4" cy="4" r="3" fill="#cfe0f4" /><path d="M1 9h10v5H1z" fill="#e9d44e" /><path d="M6 6l8-1 1 5H8z" fill="#5f8fd0" /><path d="M8 11l3 3 5-5" stroke="#59a82a" strokeWidth="2" fill="none" /></svg>
      </StatusCell>
      <StatusCell title="全屏显示" className="w-[26px] pl-1">
        <svg viewBox="0 0 16 13" className="w-4 h-[13px]" fill="none" stroke="#d4d4d4"><path d="M.5.500h15v12H.5z" strokeWidth="1.400" /><path d="M9 3h4v3M13 3L9.500 6M7 10H3V7M3 10l3.500-3" /></svg>
      </StatusCell>
      <StatusCell title="自定义" className="w-6 !border-l-0">
        <svg viewBox="0 0 15 12" className="w-[15px] h-3"><path d="M0 1h15M0 6h15M0 11h15" stroke="#d0d0d0" strokeWidth="2" /></svg>
      </StatusCell>
    </div>
  </footer>
);

const Watermark: React.FC = () => (
  <div className="absolute right-[66px] bottom-[28px] w-[240px] h-[112px] pointer-events-none opacity-80">
    <svg viewBox="994 690 240 112" className="w-full h-full" fill="#fff" stroke="#d2d2d2" strokeWidth="1">
      <g className="font-['Liberation_Sans','Noto_Sans_CJK_SC',sans-serif]" fontWeight="700">
        <text x="997" y="763" fontSize="53">Bai</text>
        <text x="1144" y="760" fontSize="41">经验</text>
      </g>
      <ellipse cx="1087" cy="725" rx="8" ry="10" />
      <ellipse cx="1102" cy="707" rx="8" ry="11" />
      <ellipse cx="1122" cy="706" rx="8" ry="11" />
      <ellipse cx="1135" cy="723" rx="7" ry="10" />
      <path d="M1109 724c9 0 11 8 18 14s12 11 8 20-14 8-25 7-19 2-25-6 0-16 7-22 8-13 17-13z" />
      <text x="1090" y="758" fontSize="28" fontWeight="700" fill="#c4c4c4" className="font-['Liberation_Sans',sans-serif]">du</text>
      <text x="1001" y="793" fontSize="27" className="font-['Open_Sans',sans-serif]">jingyan.baidu.com</text>
    </svg>
  </div>
);

const App: React.FC = () => (
  <div className="relative flex flex-col h-screen min-w-[1200px] min-h-[830px] overflow-hidden px-[7px] pb-2 pt-[9px] bg-linear-to-b from-[#39465a] from-1% via-[#c8d9ea] via-4% to-[#a9cbee] border-x border-[#1b2430] shadow-[inset_0_0_0_1px_#e4edf6] font-['Noto_Sans','Noto_Sans_CJK_SC',sans-serif]">
    <Header />
    <FileTabs />
    <div className="flex flex-1 min-h-0">
      <Sidebar />
      <Viewport />
      <div className="w-[204px] shrink-0 flex flex-col pl-1 pt-[2px] bg-[#efefef]">
        <ProjectBrowser />
        <SettingsPanel />
      </div>
    </div>
    <CommandLine />
    <StatusBar />
    <Watermark />
  </div>
);

export default App;
